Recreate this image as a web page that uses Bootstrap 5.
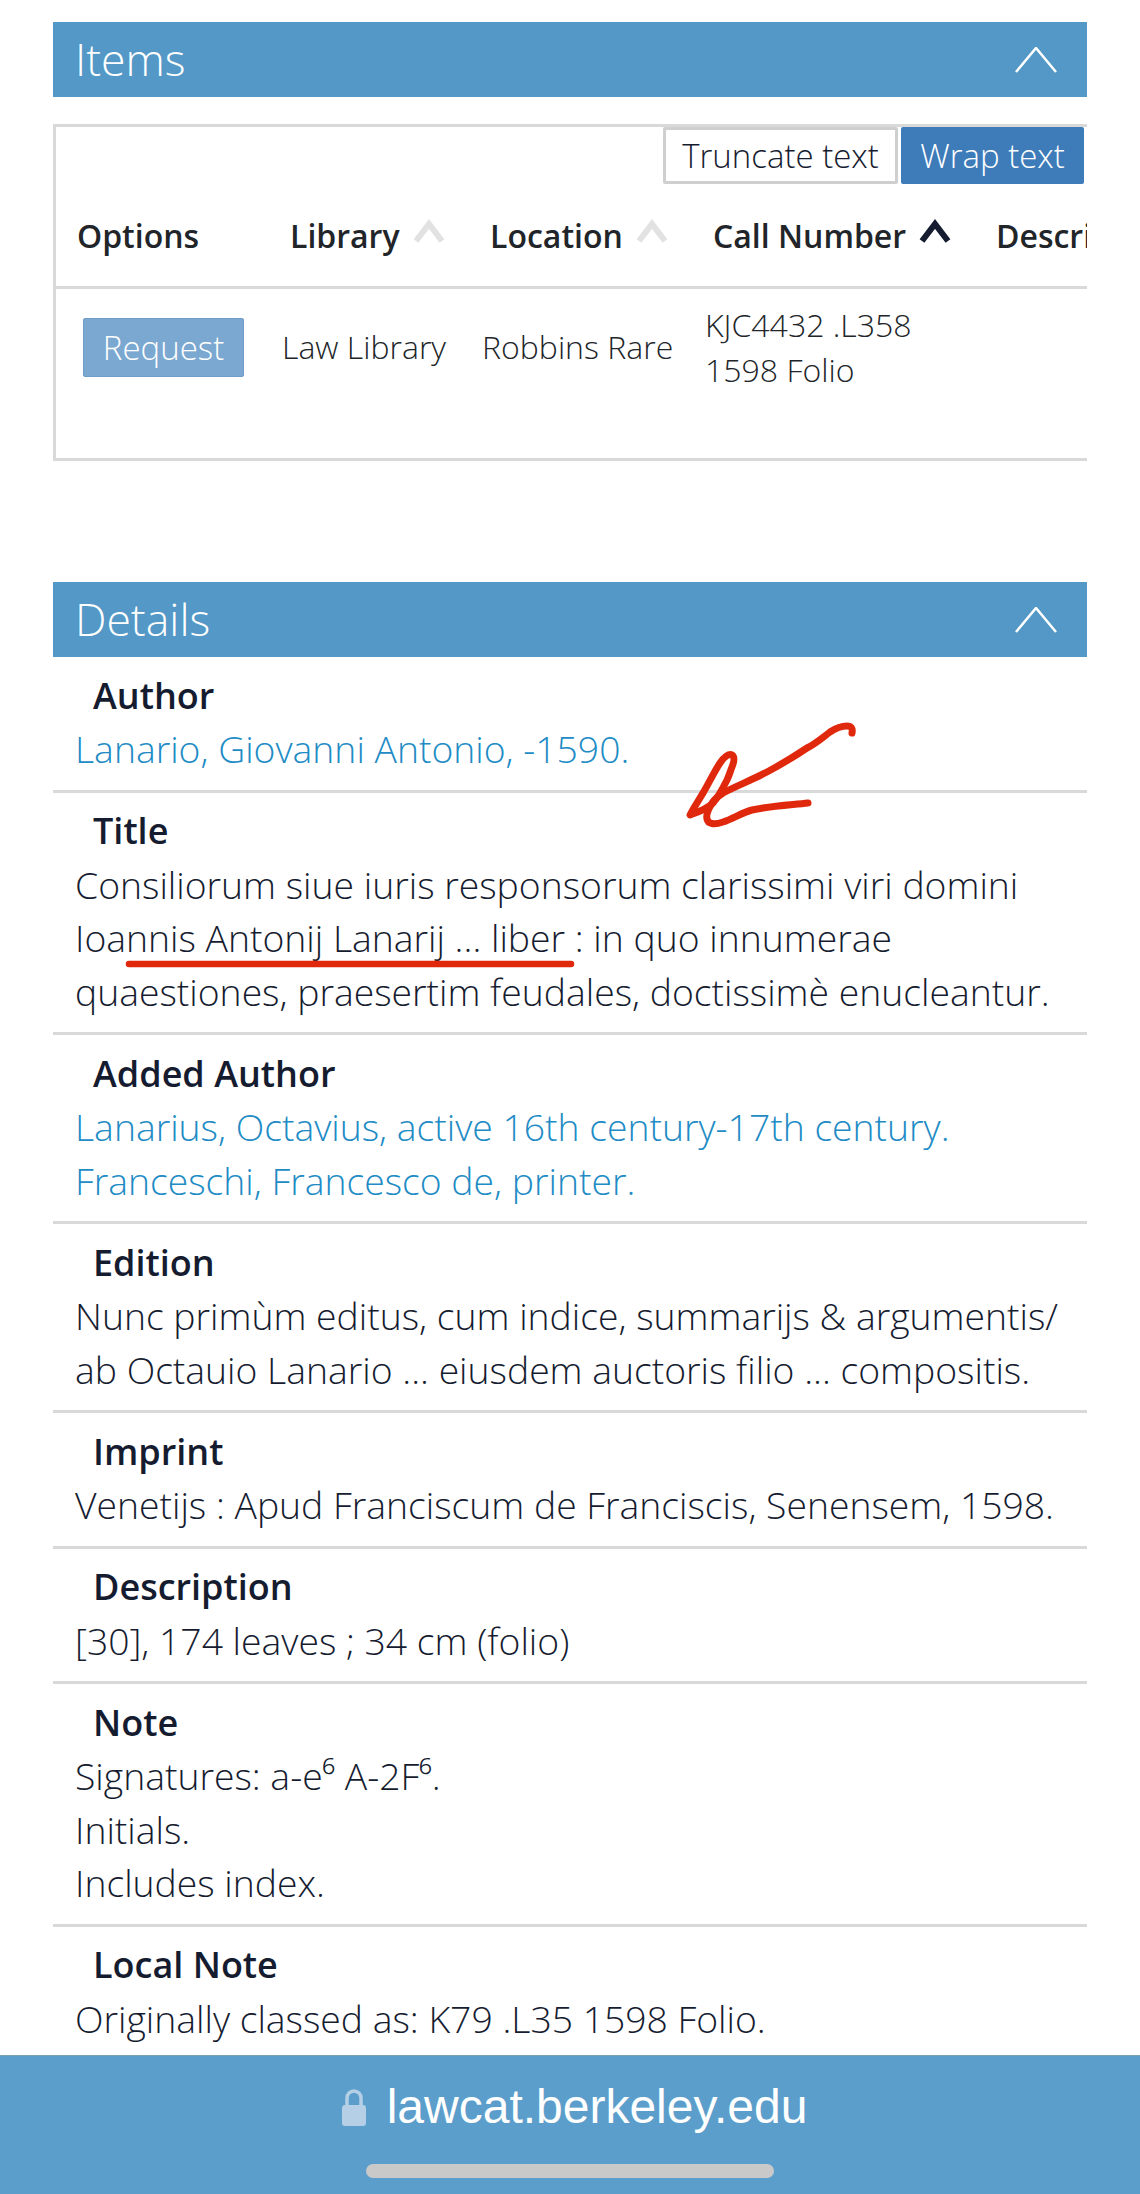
<!DOCTYPE html>
<html lang="en">
<head>
    <meta charset="UTF-8">
    <meta name="viewport" content="width=device-width, initial-scale=1.0">
    <title>Lawcat</title>
    <link href="https://cdn.jsdelivr.net/npm/bootstrap@5.3.0/dist/css/bootstrap.min.css" rel="stylesheet">
    <style>
        body {
            font-family: "Open Sans", sans-serif;
            font-weight: 300;
            font-size: 37.3px;
            line-height: 53.5px;
            color: #161c30;
            height: 2194px;
            overflow: hidden;
        }

        .page-wrap {
            height: 2194px;
            padding: 22px 53px 0;
        }

        .section-bar {
            height: 75px;
            padding: 0 30px 2px 22px;
            background-color: #5398c6;
            color: #fff;
            font-size: 44.5px;
        }

        .section-bar svg {
            width: 42px;
            height: 26px;
            margin-top: 2px;
        }

        .items-box {
            margin-top: 27px;
            margin-bottom: 121px;
            height: 337px;
            border: solid #d9d9d9;
            border-width: 3px 0 3px 3px;
        }

        .text-toggle {
            height: 57px;
            padding: 0 3px 0 0;
        }

        .text-toggle .btn {
            font-size: 33px;
            font-weight: 300;
            line-height: 1;
            border-radius: 2px;
            padding: 0;
            height: 57px;
        }

        .btn-truncate {
            width: 235px;
            margin-right: 3px;
            color: #161c30;
            background: #fff;
            border: 3px solid #cfcfcf;
        }

        .btn-wrap-text,
        .btn-wrap-text:hover {
            width: 183px;
            color: #fff;
            background: #3d7bb9;
            border: 0;
        }

        .holdings {
            width: 1300px;
            table-layout: fixed;
            margin: 0;
        }

        .holdings th,
        .holdings td {
            border: 0;
            color: inherit;
            background: transparent;
            box-shadow: none;
            white-space: nowrap;
        }

        .holdings th {
            height: 103px;
            padding: 2px 0 0 21px;
            font-weight: 600;
            font-size: 32px;
            vertical-align: middle;
            border-bottom: 3px solid #d9d9d9;
        }

        .holdings th svg {
            width: 34px;
            height: 25px;
            margin-left: 12px;
            vertical-align: 4px;
        }

        .holdings td {
            padding: 13px 0 0 13px;
            font-size: 32px;
            line-height: 45px;
            vertical-align: top;
        }

        .holdings td.cell-mid {
            padding-top: 35px;
        }

        .btn-request,
        .btn-request:hover {
            width: 161px;
            height: 59px;
            margin: 29px 0 0 27px;
            padding: 0;
            font-size: 33px;
            font-weight: 300;
            line-height: 1;
            color: #fff;
            background: #7ba8d1;
            border: 1px solid #6f9dc8;
            border-radius: 2px;
        }

        .details-row {
            padding: 11.5px 22px 14px;
            border-bottom: 3px solid #d9d9d9;
        }

        .details-row:last-child {
            border-bottom: 0;
        }

        .details-label {
            padding-left: 18px;
            font-size: 36px;
            font-weight: 600;
        }

        .details-row a {
            color: #218bc5;
            text-decoration: none;
        }

        .url-bar {
            position: fixed;
            left: 0;
            right: 0;
            bottom: 0;
            height: 139px;
            background-color: #5b9ecb;
            border-top: 1px solid #7d9fb6;
            color: #fff;
        }

        .url-text {
            padding-left: 8px;
            font-family: "Liberation Sans", sans-serif;
            font-weight: 400;
            font-size: 48px;
            line-height: 1;
            margin-top: 27px;
        }

        .url-text svg {
            width: 26px;
            height: 37px;
            margin-right: 20px;
        }

        .home-pill {
            width: 408px;
            height: 14px;
            margin: 33px auto 0;
            background: #c9c9c9;
            border-radius: 7px;
        }

        .ink-layer {
            position: absolute;
            top: 0;
            left: 0;
            width: 1140px;
            height: 2194px;
            pointer-events: none;
        }
    </style>
</head>
<body class="position-relative">
    <div class="page-wrap">

        <!-- Items -->
        <div class="section-bar d-flex align-items-center justify-content-between">
            <span>Items</span>
            <svg viewBox="0 0 42 26"><path d="M1 25 21 1 41 25" fill="none" stroke="#fff" stroke-width="2.5"/></svg>
        </div>
        <div class="items-box overflow-hidden">
            <div class="text-toggle d-flex justify-content-end">
                <button class="btn btn-truncate" type="button">Truncate text</button>
                <button class="btn btn-wrap-text" type="button">Wrap text</button>
            </div>
            <table class="table holdings">
                <colgroup>
                    <col style="width: 213px">
                    <col style="width: 200px">
                    <col style="width: 223px">
                    <col style="width: 283px">
                    <col style="width: 381px">
                </colgroup>
                <thead>
                    <tr>
                        <th>Options</th>
                        <th>Library<svg viewBox="0 0 34 25"><path d="M4 22 17 5 30 22" fill="none" stroke="#e2e2e2" stroke-width="6"/></svg></th>
                        <th>Location<svg viewBox="0 0 34 25"><path d="M4 22 17 5 30 22" fill="none" stroke="#e2e2e2" stroke-width="6"/></svg></th>
                        <th>Call Number<svg viewBox="0 0 34 25"><path d="M4 22 17 5 30 22" fill="none" stroke="#161c30" stroke-width="6"/></svg></th>
                        <th>Description</th>
                    </tr>
                </thead>
                <tbody>
                    <tr>
                        <td class="p-0"><button class="btn btn-request" type="button">Request</button></td>
                        <td class="cell-mid">Law Library</td>
                        <td class="cell-mid">Robbins Rare</td>
                        <td>KJC4432 .L358<br>1598 Folio</td>
                        <td></td>
                    </tr>
                </tbody>
            </table>
        </div>

        <!-- Details -->
        <div class="section-bar d-flex align-items-center justify-content-between">
            <span>Details</span>
            <svg viewBox="0 0 42 26"><path d="M1 25 21 1 41 25" fill="none" stroke="#fff" stroke-width="2.5"/></svg>
        </div>
        <div class="details-row">
            <div class="details-label">Author</div>
            <a href="#">Lanario, Giovanni Antonio, -1590.</a>
        </div>
        <div class="details-row">
            <div class="details-label">Title</div>
            Consiliorum siue iuris responsorum clarissimi viri domini<br>Ioannis Antonij Lanarij ... liber : in quo innumerae<br>quaestiones, praesertim feudales, doctissimè enucleantur.
        </div>
        <div class="details-row">
            <div class="details-label">Added Author</div>
            <a href="#">Lanarius, Octavius, active 16th century-17th century.</a><br>
            <a href="#">Franceschi, Francesco de, printer.</a>
        </div>
        <div class="details-row">
            <div class="details-label">Edition</div>
            Nunc primùm editus, cum indice, summarijs &amp; argumentis/<br>ab Octauio Lanario ... eiusdem auctoris filio ... compositis.
        </div>
        <div class="details-row">
            <div class="details-label">Imprint</div>
            Venetijs : Apud Franciscum de Franciscis, Senensem, 1598.
        </div>
        <div class="details-row">
            <div class="details-label">Description</div>
            [30], 174 leaves ; 34 cm (folio)
        </div>
        <div class="details-row">
            <div class="details-label">Note</div>
            Signatures: a-e⁶ A-2F⁶.<br>Initials.<br>Includes index.
        </div>
        <div class="details-row">
            <div class="details-label">Local Note</div>
            Originally classed as: K79 .L35 1598 Folio.
        </div>
    </div>

    <!-- Safari address bar -->
    <div class="url-bar">
        <div class="url-text d-flex align-items-center justify-content-center">
            <svg viewBox="0 0 26 37"><path d="M6 17V9a7 7 0 0 1 14 0v8" fill="none" stroke="#b4cfe6" stroke-width="3.5"/><rect x="1" y="16" width="24" height="21" rx="3" fill="#b4cfe6"/></svg>
            <span>lawcat.berkeley.edu</span>
        </div>
        <div class="home-pill"></div>
    </div>

    <!-- Red pen marks on top of the page -->
    <svg class="ink-layer" viewBox="0 0 1140 2194">
        <g fill="none" stroke="#e0290c" stroke-linecap="round" stroke-linejoin="round">
            <path stroke-width="6.5" d="M129 964H571"/>
            <path stroke-width="7" d="M852 733C853 728 851 726 847 726 842 726 836 728 830 732 822 738 815 744 807 748 795 756 782 764 767 772 752 780 736 786 723 793 717 797 713 800 711 805 708 810 706 815 707 819 708 824 714 825 723 822 733 819 741 813 752 810 770 806 790 805 808 803"/>
            <path stroke-width="7" d="M690 815C695 805 699 800 703 793 709 783 714 772 720 763 724 757 729 753 732 755 735 757 734 762 732 767 730 772 729 776 727 780 723 788 719 796 713 803 707 809 699 812 690 815Z"/>
        </g>
    </svg>
</body>
</html>
